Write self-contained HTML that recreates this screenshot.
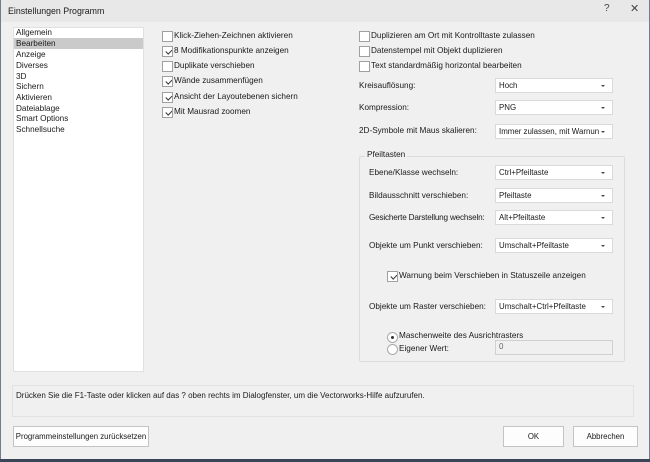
<!DOCTYPE html>
<html><head><meta charset="utf-8"><style>
*{margin:0;padding:0;box-sizing:border-box}
body{width:650px;height:462px;background:#f0f0f0;font-family:"Liberation Sans",Arial,sans-serif;font-size:8.2px;color:#1a1a1a;position:relative;overflow:hidden}
.a{position:absolute;white-space:nowrap}
.cb{position:absolute;width:11px;height:11px;background:#fff;border:1px solid #a0a0a0;overflow:hidden}
.cb.c::after{content:"";position:absolute;left:3.5px;top:1px;width:2.5px;height:5px;border:solid #333;border-width:0 1px 1px 0;transform:rotate(45deg)}
.dd{position:absolute;left:495px;width:118px;height:15px;background:#fff;border:1px solid #dadada;padding:2px 14px 0 3px;font-size:7.9px;overflow:hidden;white-space:nowrap}
.dd::after{content:"";position:absolute;right:7px;top:6px;border:2px solid transparent;border-top:2.5px solid #444}
.btn{position:absolute;height:21px;background:#fdfdfd;border:1px solid #c4c4c4;text-align:center;line-height:19px;white-space:nowrap;font-size:7.8px}
.li{position:absolute;left:16px}
</style></head><body>
<div class="a" style="left:0;top:0;width:650px;height:22px;background:#e8e8e8"></div>
<div class="a" style="left:0;top:0;width:1px;height:462px;background:#6d7d96"></div>
<div class="a" style="left:649px;top:0;width:1px;height:462px;background:#6d7d96"></div>
<div class="a" style="left:8px;top:6px;font-size:8.8px">Einstellungen Programm</div>
<div class="a" style="left:604px;top:3px;font-size:10px;color:#444">?</div>
<div class="a" style="left:630px;top:2px;font-size:11px;color:#444">✕</div>

<div class="a" style="left:13px;top:27px;width:131px;height:345px;background:#fff;border:1px solid #e0e0e0"></div>
<div class="a" style="left:14px;top:38px;width:129px;height:11px;background:#cacaca"></div>
<div class="li a" style="top:28px">Allgemein</div>
<div class="li a" style="top:39px">Bearbeiten</div>
<div class="li a" style="top:50px">Anzeige</div>
<div class="li a" style="top:61px">Diverses</div>
<div class="li a" style="top:72px">3D</div>
<div class="li a" style="top:82px">Sichern</div>
<div class="li a" style="top:93px">Aktivieren</div>
<div class="li a" style="top:104px">Dateiablage</div>
<div class="li a" style="top:114px">Smart Options</div>
<div class="li a" style="top:125px">Schnellsuche</div>

<div class="cb" style="left:162px;top:31px"></div><div class="a" style="left:174px;top:31px">Klick-Ziehen-Zeichnen aktivieren</div>
<div class="cb c" style="left:162px;top:46px"></div><div class="a" style="left:174px;top:46px">8 Modifikationspunkte anzeigen</div>
<div class="cb" style="left:162px;top:61px"></div><div class="a" style="left:174px;top:61px">Duplikate verschieben</div>
<div class="cb c" style="left:162px;top:76px"></div><div class="a" style="left:174px;top:76px">Wände zusammenfügen</div>
<div class="cb c" style="left:162px;top:92px"></div><div class="a" style="left:174px;top:92px">Ansicht der Layoutebenen sichern</div>
<div class="cb c" style="left:162px;top:107px"></div><div class="a" style="left:174px;top:107px">Mit Mausrad zoomen</div>

<div class="cb" style="left:359px;top:31px"></div><div class="a" style="left:371px;top:31px">Duplizieren am Ort mit Kontrolltaste zulassen</div>
<div class="cb" style="left:359px;top:46px"></div><div class="a" style="left:371px;top:46px">Datenstempel mit Objekt duplizieren</div>
<div class="cb" style="left:359px;top:61px"></div><div class="a" style="left:371px;top:61px">Text standardmäßig horizontal bearbeiten</div>

<div class="a" style="left:359px;top:81px">Kreisauflösung:</div><div class="dd" style="top:78px">Hoch</div>
<div class="a" style="left:359px;top:103px">Kompression:</div><div class="dd" style="top:100px">PNG</div>
<div class="a" style="left:359px;top:126px">2D-Symbole mit Maus skalieren:</div><div class="dd" style="top:124px">Immer zulassen, mit Warnun</div>

<div class="a" style="left:359px;top:156px;width:266px;height:206px;border:1px solid #dcdcdc;border-radius:2px"></div>
<div class="a" style="left:365px;top:150px;background:#f0f0f0;padding:0 2px">Pfeiltasten</div>
<div class="a" style="left:369px;top:168px">Ebene/Klasse wechseln:</div><div class="dd" style="top:165px">Ctrl+Pfeiltaste</div>
<div class="a" style="left:369px;top:191px">Bildausschnitt verschieben:</div><div class="dd" style="top:188px">Pfeiltaste</div>
<div class="a" style="left:369px;top:213px;letter-spacing:-0.2px">Gesicherte Darstellung wechseln:</div><div class="dd" style="top:210px">Alt+Pfeiltaste</div>
<div class="a" style="left:369px;top:241px">Objekte um Punkt verschieben:</div><div class="dd" style="top:238px">Umschalt+Pfeiltaste</div>
<div class="cb c" style="left:387px;top:271px"></div><div class="a" style="left:399px;top:271px">Warnung beim Verschieben in Statuszeile anzeigen</div>
<div class="a" style="left:369px;top:302px">Objekte um Raster verschieben:</div><div class="dd" style="top:299px">Umschalt+Ctrl+Pfeiltaste</div>
<div class="a" style="left:387px;top:332px;width:11px;height:11px;border:1px solid #aaa;border-radius:50%;background:#fff"><div style="position:absolute;left:3px;top:3px;width:3px;height:3px;border-radius:50%;background:#333"></div></div>
<div class="a" style="left:399px;top:331px">Maschenweite des Ausrichtrasters</div>
<div class="a" style="left:387px;top:344px;width:11px;height:11px;border:1px solid #aaa;border-radius:50%;background:#fff"></div>
<div class="a" style="left:399px;top:344px">Eigener Wert:</div>
<div class="a" style="left:495px;top:340px;width:118px;height:15px;border:1px solid #d0d0d0;background:#f0f0f0;padding:1px 3px;font-size:8px;color:#666">0</div>

<div class="a" style="left:12px;top:385px;width:622px;height:32px;border:1px solid #e2e2e2;background:#f0f0f0"></div>
<div class="a" style="left:16px;top:391px;font-size:8px">Drücken Sie die F1-Taste oder klicken auf das ? oben rechts im Dialogfenster, um die Vectorworks-Hilfe aufzurufen.</div>

<div class="btn" style="left:13px;top:426px;width:136px">Programmeinstellungen zurücksetzen</div>
<div class="btn" style="left:503px;top:426px;width:61px">OK</div>
<div class="btn" style="left:573px;top:426px;width:65px">Abbrechen</div>
<div class="a" style="left:0;top:459px;width:650px;height:3px;background:#3a4658"></div>
</body></html>
